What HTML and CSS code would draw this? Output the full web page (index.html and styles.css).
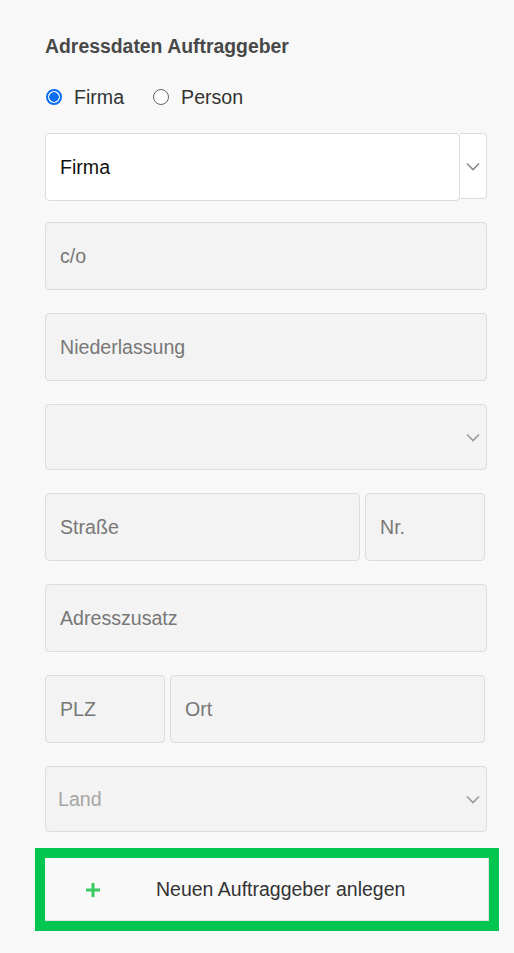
FILE: index.html
```html
<!DOCTYPE html>
<html lang="de">
<head>
<meta charset="utf-8">
<title>Adressdaten Auftraggeber</title>
<link rel="stylesheet" href="styles.css">
</head>
<body>
<div class="form">
  <h2 class="title">Adressdaten Auftraggeber</h2>
  <div class="radios">
    <label class="radio-item"><span class="radio checked"></span>Firma</label>
    <label class="radio-item"><span class="radio"></span>Person</label>
  </div>
  <div class="select-white">
    <div class="sw-main">Firma</div>
    <div class="sw-arrow">
      <svg width="14" height="9" viewBox="0 0 14 9"><path d="M1 1.5 L7 7.5 L13 1.5" fill="none" stroke="#8a8a8a" stroke-width="1.6"/></svg>
    </div>
  </div>
  <div class="field">c/o</div>
  <div class="field">Niederlassung</div>
  <div class="field select">
    <span></span>
    <svg width="14" height="9" viewBox="0 0 14 9"><path d="M1 1.5 L7 7.5 L13 1.5" fill="none" stroke="#9a9a9a" stroke-width="1.6"/></svg>
  </div>
  <div class="row">
    <div class="field wide">Straße</div>
    <div class="field narrow">Nr.</div>
  </div>
  <div class="field">Adresszusatz</div>
  <div class="row">
    <div class="field narrow">PLZ</div>
    <div class="field wide">Ort</div>
  </div>
  <div class="field select land">
    <span>Land</span>
    <svg width="14" height="9" viewBox="0 0 14 9"><path d="M1 1.5 L7 7.5 L13 1.5" fill="none" stroke="#9a9a9a" stroke-width="1.6"/></svg>
  </div>
  <button class="add-btn">
    <svg class="plus" width="16" height="16" viewBox="0 0 16 16"><path d="M8 1 V15 M1 8 H15" stroke="#3ccb62" stroke-width="3"/></svg>
    <span class="add-label">Neuen Auftraggeber anlegen</span>
  </button>
</div>
</body>
</html>
```
FILE: styles.css
```css
* { box-sizing: border-box; }
html, body {
  margin: 0;
  padding: 0;
  background: #f8f8f8;
}
body {
  font-family: "Liberation Sans", Arial, sans-serif;
  width: 514px;
  height: 953px;
  overflow: hidden;
}
.form {
  display: flex;
  flex-direction: column;
  padding: 34px 27px 0 45px;
}
.title {
  margin: 0;
  font-size: 19.4px;
  line-height: 24px;
  font-weight: bold;
  color: #484848;
}
.radios {
  display: flex;
  align-items: center;
  margin-top: 27px;
  height: 24px;
}
.radio-item {
  display: flex;
  align-items: center;
  font-size: 19.6px;
  color: #333;
  margin-right: 28px;
}
.radio {
  width: 16px;
  height: 16px;
  border-radius: 50%;
  border: 1px solid #666;
  background: #fff;
  margin: 0 12px 0 1px;
}
.radio.checked {
  border: 2px solid #0a6ef0;
  background: radial-gradient(circle, #0a6ef0 0 4.5px, #fff 5px);
}
.select-white {
  display: flex;
  align-items: flex-start;
  margin-top: 24px;
}
.sw-main {
  width: 415px;
  height: 68px;
  background: #fff;
  border: 1px solid #dcdcdc;
  border-radius: 4px;
  display: flex;
  align-items: center;
  padding-left: 14px;
  font-size: 19.6px;
  color: #111;
}
.sw-arrow {
  width: 27px;
  height: 66px;
  background: #fff;
  border: 1px solid #dcdcdc;
  border-left: none;
  border-radius: 0 4px 4px 0;
  display: flex;
  align-items: center;
  justify-content: center;
}
.field {
  height: 68px;
  margin-top: 23px;
  background: #f3f3f3;
  border: 1px solid #dcdcdc;
  border-radius: 4px;
  display: flex;
  align-items: center;
  padding-left: 14px;
  font-size: 19.6px;
  color: #777;
}
.select-white + .field { margin-top: 21px; }
.field.select {
  height: 66px;
  justify-content: space-between;
  padding-right: 6px;
}
.land span {
  color: #a5a5a5;
  margin-left: -2px;
}
.row {
  display: flex;
  gap: 5px;
  margin-top: 23px;
  margin-right: 2px;
}
.row .field { margin-top: 0; }
.row .wide { width: 315px; }
.row .narrow { width: 120px; }
.add-btn {
  margin: 16px -12px 0 -10px;
  height: 83px;
  border: 10px solid #02c650;
  background: #f9f9f9;
  box-shadow: inset -1px -1px 0 #e2e2e2;
  display: flex;
  align-items: center;
  padding: 0;
  font-family: "Liberation Sans", Arial, sans-serif;
  font-size: 19.5px;
  color: #333;
  cursor: pointer;
}
.plus { margin-left: 40px; }
.add-label { margin-left: 55px; }
```
